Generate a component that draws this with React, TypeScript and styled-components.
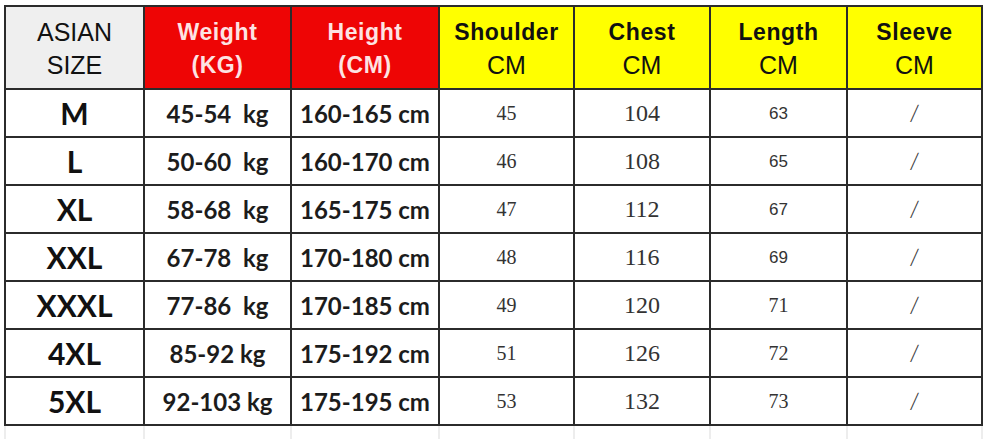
import { Fragment } from "react";
import styled, { createGlobalStyle } from "styled-components";

const GlobalStyle = createGlobalStyle`
  html, body {
    margin: 0;
    padding: 0;
    background: #ffffff;
  }
  body {
    font-family: "Liberation Sans", Arial, sans-serif;
  }
`;

const COLUMNS = "137px 145px 146px 133px 134px 135px 133px";

const Page = styled.div`
  padding: 5px 0 0 4px;
  width: 985px;
  height: 439px;
  box-sizing: border-box;
  overflow: hidden;
`;

const Table = styled.div`
  display: grid;
  grid-template-columns: ${COLUMNS};
  grid-template-rows: 81px repeat(7, 46px);
  gap: 2px;
  padding: 2px;
  background: #2b2b2b;
  width: max-content;
`;

// faint ruling of the next (cut off) row below the table
const Ghost = styled.div`
  display: grid;
  grid-template-columns: ${COLUMNS};
  gap: 2px;
  padding: 0 2px;
  height: 20px;
  width: max-content;
  background: #ededed;
  & > div {
    background: #ffffff;
  }
`;

type Tone = "gray" | "red" | "yellow";

const headBg: Record<Tone, string> = {
  gray: "#efefef",
  red: "#ee0505",
  yellow: "#ffff00",
};

const HeadCell = styled.div<{ $tone: Tone }>`
  display: flex;
  flex-direction: column;
  align-items: center;
  justify-content: center;
  background: ${(p) => headBg[p.$tone]};
  color: ${(p) => (p.$tone === "red" ? "#fde3e3" : "#111111")};
  font-family: "Liberation Sans", Arial, sans-serif;
  font-size: 24px;
  line-height: 33px;
  padding-top: 3px;
  box-sizing: border-box;
`;

const HeadLine = styled.span<{ $bold?: boolean }>`
  font-weight: ${(p) => (p.$bold ? 700 : 400)};
  letter-spacing: ${(p) => (p.$bold ? "0.6px" : "0")};
  font-size: ${(p) => (p.$bold ? "23px" : "25px")};
`;

const Cell = styled.div`
  display: flex;
  align-items: center;
  justify-content: center;
  background: #ffffff;
  color: #1a1a1a;
`;

const SizeCell = styled(Cell)`
  font-family: Lato, "Open Sans", sans-serif;
  font-weight: 700;
  font-size: 30px;
  color: #111111;
`;

const RangeCell = styled(Cell)`
  font-family: Lato, "Open Sans", sans-serif;
  font-weight: 700;
  font-size: 24px;
  white-space: pre;
  color: #1c1c1c;
`;

const NumCell = styled(Cell)<{ $size: number; $serif?: boolean }>`
  font-family: ${(p) =>
    p.$serif
      ? '"Liberation Serif", "Times New Roman", serif'
      : '"Liberation Sans", Arial, sans-serif'};
  font-size: ${(p) => p.$size}px;
  color: #333333;
  padding-top: 1px;
`;

const Slash = styled(Cell)`
  font-family: "DejaVu Sans", sans-serif;
  font-size: 21px;
  font-weight: 300;
  color: #3a3a3a;
  transform: none;
  & > span {
    display: inline-block;
    transform: skewX(-8deg);
  }
`;

const headers: { top: string; bottom: string; tone: Tone }[] = [
  { top: "ASIAN", bottom: "SIZE", tone: "gray" },
  { top: "Weight", bottom: "(KG)", tone: "red" },
  { top: "Height", bottom: "(CM)", tone: "red" },
  { top: "Shoulder", bottom: "CM", tone: "yellow" },
  { top: "Chest", bottom: "CM", tone: "yellow" },
  { top: "Length", bottom: "CM", tone: "yellow" },
  { top: "Sleeve", bottom: "CM", tone: "yellow" },
];

const rows = [
  { size: "M", weight: "45-54  kg", height: "160-165 cm", shoulder: "45", chest: "104", length: "63" },
  { size: "L", weight: "50-60  kg", height: "160-170 cm", shoulder: "46", chest: "108", length: "65" },
  { size: "XL", weight: "58-68  kg", height: "165-175 cm", shoulder: "47", chest: "112", length: "67" },
  { size: "XXL", weight: "67-78  kg", height: "170-180 cm", shoulder: "48", chest: "116", length: "69" },
  { size: "XXXL", weight: "77-86  kg", height: "170-185 cm", shoulder: "49", chest: "120", length: "71" },
  { size: "4XL", weight: "85-92 kg", height: "175-192 cm", shoulder: "51", chest: "126", length: "72" },
  { size: "5XL", weight: "92-103 kg", height: "175-195 cm", shoulder: "53", chest: "132", length: "73" },
];

export default function App() {
  return (
    <Page>
      <GlobalStyle />
      <Table>
        {headers.map((h) => (
          <HeadCell key={h.top} $tone={h.tone}>
            <HeadLine $bold={h.tone !== "gray"}>{h.top}</HeadLine>
            <HeadLine $bold={h.tone === "red"}>{h.bottom}</HeadLine>
          </HeadCell>
        ))}
        {rows.map((r, i) => (
          <Fragment key={r.size}>
            <SizeCell>{r.size}</SizeCell>
            <RangeCell>{r.weight}</RangeCell>
            <RangeCell>{r.height}</RangeCell>
            <NumCell $size={20} $serif>
              {r.shoulder}
            </NumCell>
            <NumCell $size={24} $serif>
              {r.chest}
            </NumCell>
            <NumCell $size={i < 4 ? 17 : 20} $serif={i >= 4}>
              {r.length}
            </NumCell>
            <Slash>
              <span>/</span>
            </Slash>
          </Fragment>
        ))}
      </Table>
      <Ghost>
        {headers.map((h) => (
          <div key={h.top} />
        ))}
      </Ghost>
    </Page>
  );
}
